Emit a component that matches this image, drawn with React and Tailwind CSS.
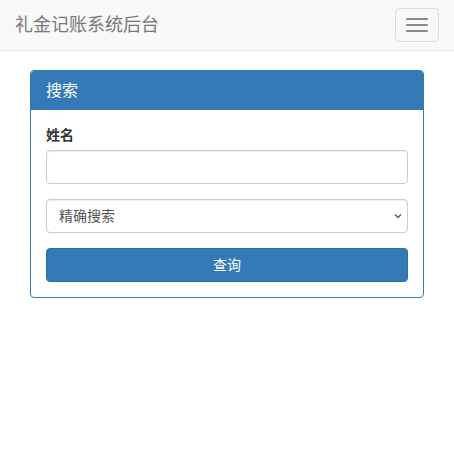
import { useState } from 'react';

const font = { fontFamily: '"Helvetica Neue", "Liberation Sans", "Noto Sans CJK SC", sans-serif' };

export default function App() {
  const [name, setName] = useState('');
  const [mode, setMode] = useState('exact');

  return (
    <div className="min-h-screen bg-white text-sm text-[#333]" style={font}>
      {/* Navbar */}
      <nav className="h-[51px] bg-[#f8f8f8] border-b border-[#e7e7e7] flex items-center justify-between px-[15px]">
        <a href="#" className="text-[18px] leading-5 text-[#777]">礼金记账系统后台</a>
        <button className="w-[44px] h-[34px] border border-[#ddd] rounded flex flex-col items-center justify-center gap-[4px]">
          <span className="block w-[22px] h-[2px] rounded-[1px] bg-[#888]"></span>
          <span className="block w-[22px] h-[2px] rounded-[1px] bg-[#888]"></span>
          <span className="block w-[22px] h-[2px] rounded-[1px] bg-[#888]"></span>
        </button>
      </nav>

      <div className="px-[30px] pt-[19px]">
        {/* Search panel */}
        <div className="border border-[#337ab7] rounded overflow-hidden">
          <div className="bg-[#337ab7] text-white text-[16px] leading-[19px] px-[15px] py-[10px]">搜索</div>
          <div className="p-[15px]">
            <label className="block font-bold leading-5 mb-[5px]">姓名</label>
            <input
              value={name}
              onChange={(e) => setName(e.target.value)}
              className="block w-full h-[34px] px-3 border border-[#ccc] rounded shadow-[inset_0_1px_1px_rgba(0,0,0,0.075)] outline-none"
            />
            <div className="relative mt-[15px]">
              <select
                value={mode}
                onChange={(e) => setMode(e.target.value)}
                className="block w-full h-[34px] pl-3 pr-8 border border-[#ccc] rounded bg-white text-[#555] appearance-none shadow-[inset_0_1px_1px_rgba(0,0,0,0.075)] outline-none"
              >
                <option value="exact">精确搜索</option>
                <option value="fuzzy">模糊搜索</option>
              </select>
              <svg className="absolute right-[6px] top-[14px] pointer-events-none" width="8" height="6" viewBox="0 0 8 6">
                <path d="M1 1.5 L4 4.5 L7 1.5" fill="none" stroke="#555" strokeWidth="1.3" />
              </svg>
            </div>
            <button className="mt-[15px] w-full h-[34px] bg-[#337ab7] border border-[#2e6da4] rounded text-white">
              查询
            </button>
          </div>
        </div>
      </div>
    </div>
  );
}
